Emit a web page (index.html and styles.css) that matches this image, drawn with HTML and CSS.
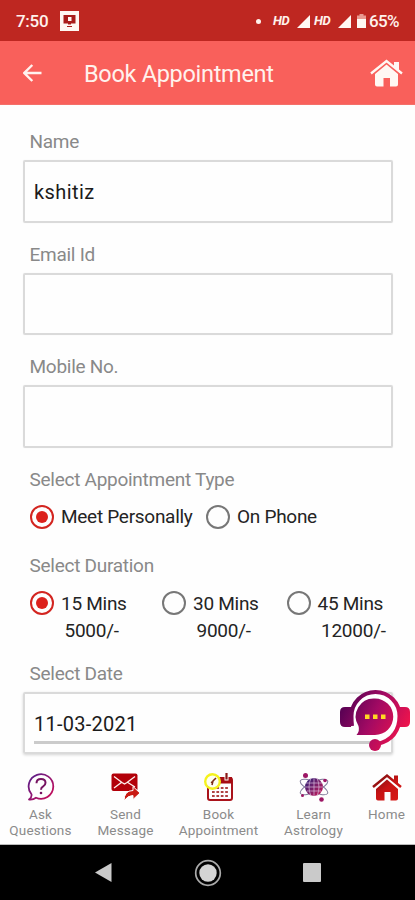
FILE: index.html
```html
<!DOCTYPE html>
<html lang="en">
<head>
<meta charset="utf-8">
<title>Book Appointment</title>
<link rel="stylesheet" href="styles.css">
</head>
<body>
<div class="screen">
  <div class="status">
    <span class="time">7:50</span>
    <svg class="cast" width="19" height="20" viewBox="0 0 19 20"><path fill="#fff8f3" d="M0 0h19v20H0z"/><path fill="#a91d1b" d="M3.500 4h12v8.500H11v1H8v-1H3.500z"/><path fill="#fff8f3" d="M8 6h3.500v4H8z"/><path fill="#a91d1b" d="M7 15h5v1H7z"/></svg>
    <span class="dot"></span>
    <span class="hd hd-one">HD</span>
    <svg class="signal" width="13" height="13" viewBox="0 0 13 13"><path d="M0 13 13 0v13z"/></svg>
    <span class="hd hd-two">HD</span>
    <svg class="signal" width="13" height="13" viewBox="0 0 13 13"><path d="M0 13 13 0v13z"/></svg>
    <svg class="battery" width="9" height="14" viewBox="0 0 9 14"><path fill="#e99a91" d="M2.500 0h4v1.500H9V5H0V1.500h2.500z"/><path fill="#fff8f3" d="M0 5h9v9H0z"/></svg>
    <span class="percent">65%</span>
  </div>
  <header class="bar">
    <svg class="back" width="19" height="18" viewBox="0 0 19 18"><path d="M18.500 9H1.500M9.300 1 1.300 9l8 8" fill="none" stroke="#fff2ee" stroke-width="2.400"/></svg>
    <h1>Book Appointment</h1>
    <svg class="house" width="33" height="28" viewBox="0 0 33 28"><path d="M1 14.500 16.500 2 32 14.500" fill="none" stroke="#fff8f3" stroke-width="2.300"/><path fill="#fff8f3" d="M24 3h5v9l-5-4zM16.500 5.500 28 15v10.500q0 2-2 2h-6V19h-6.500v8.500H7q-2 0-2-2V15z"/></svg>
  </header>
  <main class="form">
    <label class="label">Name</label>
    <div class="box"><span class="name">kshitiz</span></div>
    <label class="label">Email Id</label>
    <div class="box"></div>
    <label class="label">Mobile No.</label>
    <div class="box"></div>
    <div class="label">Select Appointment Type</div>
    <div class="types">
      <span class="radio on"></span><span class="opt meet">Meet Personally</span>
      <span class="radio"></span><span class="opt">On Phone</span>
    </div>
    <div class="label">Select Duration</div>
    <div class="durations">
      <div class="duration"><span class="radio on"></span><span class="opt">15 Mins</span><span class="price">5000/-</span></div>
      <div class="duration"><span class="radio"></span><span class="opt">30 Mins</span><span class="price">9000/-</span></div>
      <div class="duration"><span class="radio"></span><span class="opt">45 Mins</span><span class="price">12000/-</span></div>
    </div>
    <div class="label">Select Date</div>
    <div class="box date"><span>11-03-2021</span></div>
  </main>
  <svg class="chat" width="72" height="64" viewBox="0 0 72 64">
    <defs><linearGradient id="g" gradientUnits="userSpaceOnUse" x1="2" y1="12" x2="66" y2="44"><stop offset="0" stop-color="#500052"/><stop offset=".5" stop-color="#a30a63"/><stop offset="1" stop-color="#ef144c"/></linearGradient></defs>
    <path fill="#fff" d="M13 27a23.500 23.500 0 1 1 47 0 23.500 23.500 0 0 1-47 0"/>
    <path fill="url(#g)" d="M12 18v20H6q-5 0-5-5V23q0-5 5-5zM60 18h6q5 0 5 5v10q0 5-5 5h-6z"/>
    <path fill="none" stroke="url(#g)" stroke-width="4" d="M13 37q-.5-4-.5-10a24 24 0 0 1 48 0c0 14-6 24-22 28"/>
    <circle cx="36" cy="56" r="6" fill="url(#g)"/>
    <path fill="url(#g)" d="M36 9.500a18 18 0 1 1 0 36.500H17.500q3.500-4 2-9A18 18 0 0 1 36 9.500"/>
    <path fill="#ffd923" d="M26 25.500h4.500V30H26zM34 25.500h4.500V30H34zM42 25.500h4.500V30H42z"/>
  </svg>
  <nav class="tabs">
    <div class="tab">
      <svg width="30" height="30" viewBox="0 0 30 30"><defs><linearGradient id="a" x2="1" y2="1"><stop stop-color="#54208d"/><stop offset="1" stop-color="#d00b55"/></linearGradient></defs><path fill="none" stroke="url(#a)" stroke-width="1.800" stroke-linejoin="round" d="M5.500 22.300A12.300 12.300 0 1 1 10 25.700Q7 28 3 27.500q3-2 2.500-5.200z"/><path fill="none" stroke="#761361" stroke-width="2" d="M10.500 11.300q0-4.300 4.500-4.300t4.500 3.800q0 2.300-2.300 3.500-2.200 1.200-2.200 3.500"/><circle cx="15" cy="21" r="1.300" fill="#761361"/></svg>
      <span>Ask<br>Questions</span>
    </div>
    <div class="tab">
      <svg width="30" height="30" viewBox="0 0 30 30"><rect x="0.500" y="1.500" width="26" height="17.500" rx="2" fill="#b20009"/><path d="m3 4.500 8 6 2.500 1.500 2.500-1.500 8-6M3 16l8-6M16 10l8 5" fill="none" stroke="#fff1ef" stroke-width="1.300"/><path fill="#c91912" stroke="#fff" stroke-width="1" d="M13 29q0-10.500 9-10.500V14.500l7 6.500-7 6.500v-4q-5.500 0-9 5.500"/></svg>
      <span>Send<br>Message</span>
    </div>
    <div class="tab">
      <svg width="30" height="30" viewBox="0 0 30 30"><rect x="4" y="6" width="24" height="22" rx="2" fill="#fff" stroke="#aa131b" stroke-width="2"/><path fill="#a70c13" d="M4 5h24v6.500H4z"/><path d="M22.500 1v7.500" stroke="#fff" stroke-width="4"/><path d="M22.500 1v6.500" stroke="#8b1715" stroke-width="2.200"/><path d="M8 16h16M8 20h16M8 24h16" stroke="#b04343" stroke-width="2.200" stroke-dasharray="2.700 1.700"/><circle cx="8.500" cy="9.500" r="7.300" fill="#fffff0" stroke="#f5f21d" stroke-width="2.400"/><path d="m8 13 1-4 3-3M7 10l2 1" stroke="#7c2b13" stroke-width="1.500" fill="none"/></svg>
      <span>Book<br>Appointment</span>
    </div>
    <div class="tab">
      <svg width="30" height="30" viewBox="0 0 30 30"><defs><linearGradient id="b" x2="1" y2="1"><stop stop-color="#242279"/><stop offset="1" stop-color="#d11b58"/></linearGradient></defs><g fill="none" stroke="#807a9a" stroke-width="1"><ellipse cx="15" cy="15" rx="15" ry="5" transform="rotate(25 15 15)"/><ellipse cx="15" cy="15" rx="15" ry="5" transform="rotate(-25 15 15)"/></g><circle cx="15" cy="15" r="9" fill="url(#b)"/><path d="M7 11h16M6 15h18M8 19h14M15 6v18M12 6q-4 9 0 18M18 6q4 9 0 18" fill="none" stroke="#d8bddc" stroke-width=".7"/><g fill="#9c1664"><circle cx="6.500" cy="3.500" r="2.500"/><circle cx="26" cy="8.500" r="1.800"/><circle cx="3.500" cy="23.500" r="1.500"/><circle cx="22.500" cy="27.500" r="2.300"/></g></svg>
      <span>Learn<br>Astrology</span>
    </div>
    <div class="tab home">
      <svg width="30" height="30" viewBox="0 0 30 30"><defs><linearGradient id="h" gradientUnits="userSpaceOnUse" x1="5" y1="2" x2="25" y2="28"><stop stop-color="#6f1010"/><stop offset=".5" stop-color="#c71314"/><stop offset="1" stop-color="#d71916"/></linearGradient></defs><path d="M1 15 15 3.500 29 15" fill="none" stroke="url(#h)" stroke-width="2.500"/><path fill="url(#h)" d="M22 3.500h4V12l-4-3.500zM15 7.500 26 17v9.500q0 2-2 2h-5.500V20h-6v8.500H6q-2 0-2-2V17z"/></svg>
      <span>Home</span>
    </div>
  </nav>
  <footer class="system">
    <svg width="17" height="19" viewBox="0 0 17 19"><path fill="#cacaca" d="M0 9.500 16.500 0v19z"/></svg>
    <svg width="28" height="28" viewBox="0 0 28 28"><circle cx="14" cy="14" r="12.300" fill="none" stroke="#aaa" stroke-width="1.700"/><circle cx="14" cy="14" r="8.700" fill="#d4d4d4"/></svg>
    <svg width="18" height="19" viewBox="0 0 18 19"><rect width="18" height="19" rx="1" fill="#cacaca"/></svg>
  </footer>
</div>
</body>
</html>
```
FILE: styles.css
```css
* { box-sizing: border-box; }
body { margin: 0; font-family: Roboto, "Liberation Sans", sans-serif; }
svg { display: block; flex: none; }
.screen { position: relative; width: 415px; height: 900px; overflow: hidden; background: #fefefe; display: flex; flex-direction: column; }
.status { flex: none; height: 41px; background: #be2721; color: #fff2ec; display: flex; align-items: center; padding: 1px 15px 0 16px; white-space: nowrap; }
.time { font-size: 17px; font-weight: 500; width: 44px; letter-spacing: -.3px; }
.cast { margin-top: -1px; }
.dot { width: 5px; height: 5px; border-radius: 50%; background: #fff2ec; margin-left: 177px; }
.hd { font-family: "Liberation Sans Narrow", Roboto, sans-serif; font-size: 13px; font-weight: 700; font-style: italic; letter-spacing: -.3px; line-height: 20px; }
.hd-one { margin-left: 12px; width: 24px; }
.hd-two { margin-left: 4px; width: 24px; }
.signal { fill: #fff8f3; }
.battery { margin-left: 6px; }
.percent { font-size: 17px; font-weight: 500; margin-left: 3px; letter-spacing: -.7px; }
.bar { flex: none; height: 64px; background: #f9605b; border-bottom: 1px solid #f4706a; display: flex; align-items: center; padding: 1px 12px 0 23px; }
h1 { margin: 2px 0 0 42px; flex: 1; font-size: 23.500px; font-weight: 400; line-height: 30px; letter-spacing: -.3px; color: #fff2ed; white-space: nowrap; }
.form { flex: none; height: 652px; padding: 26px 22.500px 0 23px; }
.label { display: block; margin-left: 6.500px; height: 22px; line-height: 22px; font-size: 19px; letter-spacing: -.27px; color: #898989; white-space: nowrap; }
.box { height: 62.500px; margin: 7px 0 21px; border: 2px solid #dadada; border-radius: 2px; padding: 0 9px; line-height: 60px; font-size: 20px; letter-spacing: .25px; color: #1b1b1b; box-shadow: 0 0 1px #e4e4e4; }
.name { letter-spacing: .4px; }
.date { margin-bottom: 0; box-shadow: 0 1px 3px #d4d4d4; }
.date::after { content: ""; display: block; height: 3px; background: #cbcbcb; margin-top: -13px; }
.types { display: flex; align-items: center; height: 25px; margin: 13.500px 0 26px 7px; }
.radio { flex: none; width: 24px; height: 24px; border: 2.500px solid #777; border-radius: 50%; display: grid; place-items: center; }
.radio.on { border-color: #d32520; }
.radio.on::after { content: ""; width: 12px; height: 12px; border-radius: 50%; background: #dc211c; }
.opt { margin-left: 7px; font-size: 19px; line-height: 25px; letter-spacing: -.28px; color: #242424; white-space: nowrap; }
.meet { width: 145px; }
.durations { display: grid; grid-template-columns: 132px 124.500px 110px; margin: 13.500px 0 22px 7px; height: 50px; }
.duration { display: grid; grid-template-columns: 24px 1fr; grid-template-rows: 25px 25px; align-items: center; }
.price { grid-column: 2; margin-left: 10.500px; font-size: 19px; line-height: 25px; padding-top: 4px; letter-spacing: -.25px; color: #242424; }
.tabs { flex: none; height: 88px; display: grid; grid-template-columns: 81px 89px 97px 93px 1fr; border-bottom: 1px solid #bbb; }
.tab { display: flex; flex-direction: column; align-items: center; padding-top: 15px; font-size: 13.500px; line-height: 16px; text-align: center; color: #8b8b8b; letter-spacing: .18px; }
.tab span { margin-top: 4px; }
.home { padding-right: 2px; }
.system { flex: none; height: 55px; background: #000; display: flex; align-items: center; padding-left: 95px; }
.system svg:nth-child(2) { margin-left: 82px; }
.system svg:nth-child(3) { margin-left: 81px; }
.chat { position: absolute; left: 339px; top: 689px; }
```
